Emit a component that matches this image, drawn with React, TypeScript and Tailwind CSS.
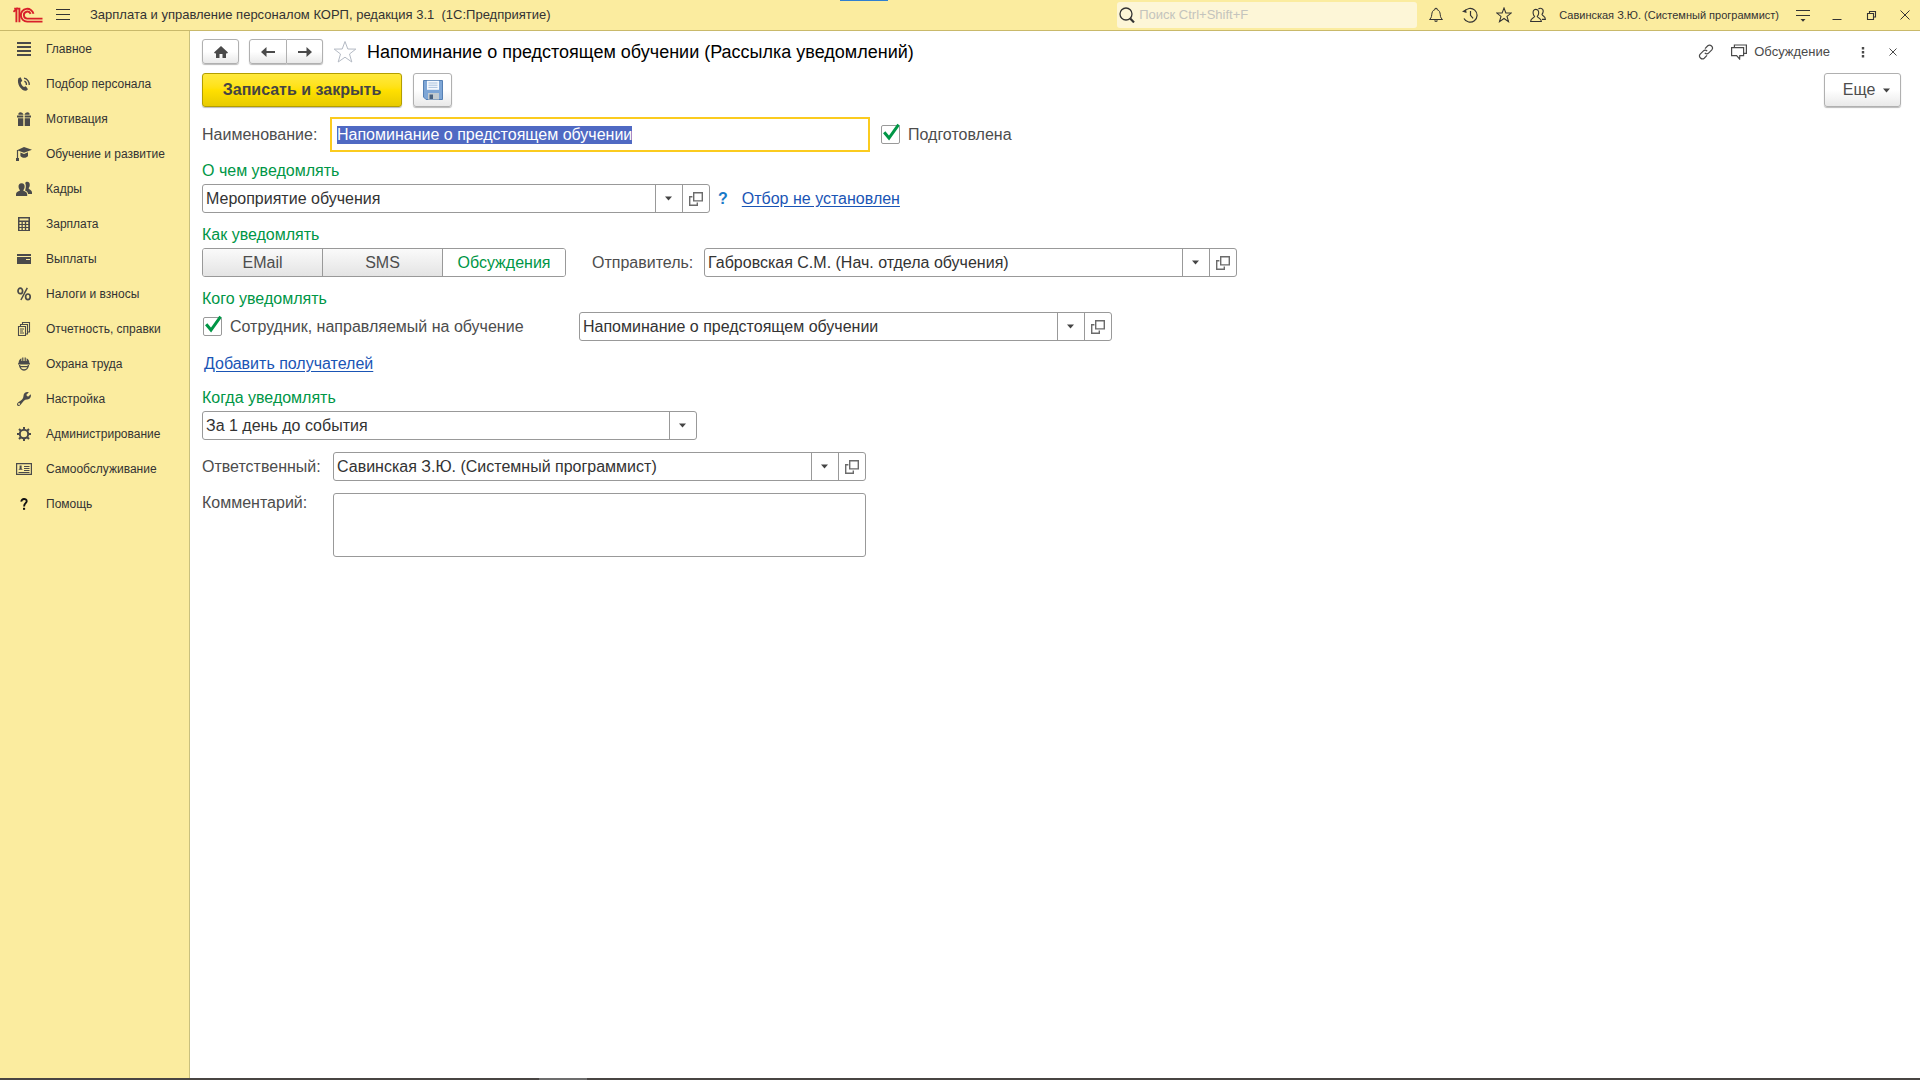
import React, { useEffect, useRef, useState } from "react";

type IconProps = { className?: string };

function Logo() {
  return (
    <svg width="30" height="16" viewBox="0 0 30 16" fill="none" stroke="#d8202a" strokeWidth="1.9">
      <path d="M0.4 4.8 L3.4 2.2 V15.2" />
      <path d="M1.2 1.6 H6.4 V15.2" />
      <path d="M20.5 6.8 A6.4 6.4 0 1 0 14.2 14.6 H29.5" />
      <path d="M17.6 6.8 A3.5 3.5 0 1 0 14.2 11.6 H29.5" />
    </svg>
  );
}

function Glyph({ children, className }: { children: React.ReactNode; className?: string }) {
  return (
    <svg width="16" height="16" viewBox="0 0 16 16" fill="none" stroke="currentColor" className={className}>
      {children}
    </svg>
  );
}

const solid = { fill: "currentColor", stroke: "none" };

const menuItems = [
  {
    label: "Главное",
    icon: <path {...solid} d="M1 1h14v2H1zM1 5h14v2H1zM1 9h14v2H1zM1 13h14v2H1z" />,
  },
  {
    label: "Подбор персонала",
    icon: (
      <>
        <path
          {...solid}
          d="M2.4 2.2 L4.6 1.2 L6.3 4.8 L4.8 6.2 C5 8.2 6.3 10 8 11 L9.8 10.2 L12 13.2 L10.2 14.8 C6 15.6 0.2 8 2.4 2.2z"
        />
        <path strokeWidth="1.3" d="M8.4 5.2 A3.6 3.6 0 0 1 10.4 9M8 2.2 A6.2 6.2 0 0 1 13.2 9" />
      </>
    ),
  },
  {
    label: "Мотивация",
    icon: (
      <path
        {...solid}
        d="M1 4.5h6.3v2H1zM8.7 4.5H15v2H8.7zM2 7.3h5.3V15H2zM8.7 7.3H14V15H8.7zM2.4 3.8C1.8 1 5.8 0 7.6 3.8zM8.4 3.8C10.2 0 14.2 1 13.6 3.8z"
      />
    ),
  },
  {
    label: "Обучение и развитие",
    icon: (
      <>
        <path {...solid} d="M8 1 L16 3.8 L8 6.8 L1 4.2z M4.4 6.4 L8 7.9 L12 6.3 V10 C10.6 12.4 5.8 12.4 4.4 10z M0 12h3v3H0z" />
        <path d="M1.5 4 V13" strokeWidth="1.2" />
      </>
    ),
  },
  {
    label: "Кадры",
    icon: (
      <path
        {...solid}
        d="M5.6 2.2C8 2.2 9 4 8.6 6.2C8.4 7.6 7.8 8.6 7.2 9.2C8 10.4 11.2 10.4 11.2 13.4V15H0V13.4C0 10.4 3.2 10.4 4 9.2C3.4 8.6 2.8 7.6 2.6 6.2C2.2 4 3.2 2.2 5.6 2.2z M9.2 2C10 .2 14 .2 13.8 4C13.7 5.6 13.2 6.4 12.6 7.2C13.2 8.6 16 9 16 11.4V13H12C12 11 10.6 10.2 9 9.4C9.8 8 10.4 4.4 9.2 2z"
      />
    ),
  },
  {
    label: "Зарплата",
    icon: (
      <path
        {...solid}
        fillRule="evenodd"
        d="M2 1h12v14H2zM3.5 2.5v2h9v-2zM3.5 6v2h2V6zM6.8 6v2h2V6zM10.2 6v2h2V6zM3.5 9v2h2V9zM6.8 9v2h2V9zM10.2 9v2h2V9zM3.5 12v2h2v-2zM6.8 12v2h2v-2zM10.2 12v2h2v-2z"
      />
    ),
  },
  {
    label: "Выплаты",
    icon: <path {...solid} fillRule="evenodd" d="M1 3h14v2H1zM1 6h14V13H1zM10 8v1h4V8z" />,
  },
  {
    label: "Налоги и взносы",
    icon: (
      <>
        <ellipse cx="4.3" cy="4.9" rx="2.3" ry="2.8" strokeWidth="1.7" />
        <ellipse cx="11.9" cy="10.8" rx="2.3" ry="2.8" strokeWidth="1.7" />
        <path strokeWidth="1.5" d="M11.3 1.8 L4.9 14" />
      </>
    ),
  },
  {
    label: "Отчетность, справки",
    icon: <path strokeWidth="1.1" d="M2.5 5.5h7v9h-7zM4.5 5V3.5h7V13H10M6.5 3V1.5h7V11H12M4 8h4M4 10h3M4 12h4" />,
  },
  {
    label: "Охрана труда",
    icon: (
      <>
        <path {...solid} d="M2.6 7C2.6 4.6 3.8 3 5.4 2.2V5h.8V1.6h1.2V5h1.2V1.6h1.2V5h.8V2.2C12.2 3 13.4 4.6 13.4 7L14 7.6V8.6H2V7.6z" />
        <path strokeWidth="1.4" d="M3.6 9C3.8 12 5.8 14 8 14S12.2 12 12.4 9M4 10.6h8" />
      </>
    ),
  },
  {
    label: "Настройка",
    icon: (
      <path
        {...solid}
        fillRule="evenodd"
        d="M12.8 1.3 L10.2 4 L12 5.8 L14.8 3.2C15.4 6 14 8.6 10.8 8.4C8.6 8.4 7.4 10.2 4.6 13.8C3.4 15.4 1.6 15.2 1.2 14.2C.6 13 1.4 11.8 2.6 11C5.4 9 7.4 7.8 7.4 5.4C7.4 2 10.2.6 12.8 1.3zM3 12.1a.9.9 0 1 0 .1 0z"
      />
    ),
  },
  {
    label: "Администрирование",
    icon: (
      <>
        <circle cx="8" cy="8" r="4.2" strokeWidth="2" />
        <path
          strokeWidth="2"
          d="M8 1v2.4M8 12.6V15M1 8h2.4M12.6 8H15M3 3l1.8 1.8M11.2 11.2L13 13M13 3l-1.8 1.8M4.8 11.2L3 13"
        />
      </>
    ),
  },
  {
    label: "Самообслуживание",
    icon: (
      <>
        <path d="M.6 2.7h14.8v10.6H.6z" strokeWidth="1.2" />
        <path {...solid} d="M3.6 4.4h2v3l1.2 1.4H2.4l1.2-1.4z" />
        <path d="M8 5.5h5.5M8 7.5h5.5M8 9.5h5.5M2.5 11.5h11" />
      </>
    ),
  },
  {
    label: "Помощь",
    icon: (
      <>
        <path stroke="#111" strokeWidth="1.9" d="M5.4 5.6C5.2 2.2 10.8 2.2 10.7 5.3C10.6 7.2 8.1 7.4 8.1 10.4" />
        <path fill="#111" stroke="none" d="M7 11.8h2.1v2H7z" />
      </>
    ),
  },
];

function BellIcon() {
  return (
    <Glyph>
      <path d="M1.5 12.5C4 10.5 3.4 8.6 4 6C4.5 3.8 5.6 3 7 2.6V1.4h2v1.2C10.4 3 11.5 3.8 12 6C12.6 8.6 12 10.5 14.5 12.5z" />
      <path {...solid} d="M6 13.6h4C9.6 15.4 6.4 15.4 6 13.6z" />
    </Glyph>
  );
}

function HistoryIcon() {
  return (
    <Glyph>
      <path d="M2.2 4.8 A6.9 6.9 0 1 1 2 11.4M8.5 4v4.4l2.6 3" strokeWidth="1.2" />
      <path {...solid} d="M0 4.6 L4.6 6 L4 2.2z" />
    </Glyph>
  );
}

function StarIcon({ className }: IconProps) {
  return (
    <svg viewBox="0 0 24 24" fill="none" stroke="currentColor" className={className}>
      <path d="M12 1.5 L14.8 9 L22.8 9.1 L16.5 14 L18.8 22 L12 17.2 L5.2 22 L7.5 14 L1.2 9.1 L9.2 9z" />
    </svg>
  );
}

function UsersIcon() {
  return (
    <Glyph>
      <path
        strokeWidth="1.1"
        d="M5.8 2.4C8.2 2.4 9 4.4 8.6 6.6C8.4 7.8 8 8.6 7.2 9.4C8 11.4 11.2 10.8 11.4 14.5H.6C.8 10.8 3.8 11.4 4.6 9.4C3.8 8.6 3.4 7.8 3.2 6.6C2.8 4.4 3.4 2.4 5.8 2.4zM8.4 2.2C9.6.8 13.4.8 13.2 4.4C13.1 5.8 12.6 6.6 12 7.4C12.6 9.4 15.4 9 15.4 12.4H12"
      />
    </Glyph>
  );
}

function ArrowDown() {
  return (
    <svg width="7" height="5" viewBox="0 0 7 5" fill="#444">
      <path d="M0 0.5h7L3.5 4.5z" />
    </svg>
  );
}

function OpenIcon() {
  return (
    <svg width="14" height="14" viewBox="0 0 14 14" fill="none" stroke="#6b6b6b" strokeWidth="1.4">
      <path d="M4.7 0.7h8.6v8.2H4.7zM3.4 4.8H0.7v8.5h7.6v-2.8" />
    </svg>
  );
}

function FloppyIcon() {
  return (
    <svg width="20" height="20" viewBox="0 0 20 20">
      <path d="M0.5 0.5h19v19H3L0.5 17z" fill="#7ea6d6" stroke="#5580b4" />
      <path d="M4 0.8h12v9H4z" fill="#f4f8fd" />
      <path d="M5.5 3h9M5.5 5.2h9M5.5 7.4h9" stroke="#a9c1de" />
      <path d="M5 13h11v6.5H5z" fill="#c3cbd0" />
      <path d="M6.5 14.5h3.5v4.5H6.5z" fill="#49617f" />
    </svg>
  );
}

type ComboProps = {
  id: string;
  value: string;
  label?: string;
  className: string;
};

function ComboField({ id, value, label, className }: ComboProps) {
  const [text, setText] = useState(value);

  return (
    <div className={`flex h-[29px] rounded-[3px] border border-[#999] bg-white ${className}`}>
      <input
        id={id}
        aria-label={label}
        value={text}
        onChange={(e) => setText(e.target.value)}
        className="min-w-0 flex-1 px-[3px] text-[#333] outline-none"
      />
      <button type="button" aria-label="Выбрать" className="flex w-[27px] items-center justify-center border-l border-[#999] pr-px">
        <ArrowDown />
      </button>
      <button type="button" aria-label="Открыть" className="flex w-[27px] items-center justify-center border-l border-[#999] pr-px">
        <OpenIcon />
      </button>
    </div>
  );
}

function CheckField({ label }: { label: string }) {
  return (
    <label className="flex items-center gap-2">
      <span className="relative size-[19px]">
        <input
          type="checkbox"
          defaultChecked
          className="peer block size-[19px] appearance-none rounded-[2px] border border-[#999] bg-white"
        />
        <svg
          viewBox="0 0 19 21"
          fill="none"
          stroke="#009646"
          strokeWidth="3"
          className="pointer-events-none invisible absolute -top-[2px] left-0 h-[21px] w-[19px] peer-checked:visible"
        >
          <path d="M3.2 9.2 L8 15 L17.6 1.6" />
        </svg>
      </span>
      {label}
    </label>
  );
}

const SectionTitle = ({ children }: { children: React.ReactNode }) => (
  <h2 className="mb-[3px] leading-5 text-[#009646]">{children}</h2>
);

const grayButton =
  "flex items-center justify-center border border-[#b0b0b0] bg-linear-to-b from-white from-50% to-[#e9e9e9] shadow-[0_1px_1px_#bbb]";

function TopBar() {
  return (
    <header className="relative flex h-[31px] items-center border-b border-[#c9b96a] bg-[#fbec9f] pr-[7px] pl-[13px] text-[13px] text-[#333]">
      <div className="absolute top-0 left-[840px] h-px w-12 bg-[#2f7fd0]" />
      <Logo />
      <button type="button" aria-label="Меню" className="ml-[13px]">
        <svg width="14" height="12" viewBox="0 0 14 12" stroke="#333">
          <path d="M0 .5h14M0 5.5h14M0 10.5h14" />
        </svg>
      </button>
      <span className="ml-5 whitespace-pre">Зарплата и управление персоналом КОРП, редакция 3.1  (1С:Предприятие)</span>
      <label className="ml-auto flex h-[26px] w-[300px] items-center gap-1 rounded-[3px] bg-[#fdf6d7] pl-[2px]">
        <svg width="16" height="16" viewBox="0 0 16 16" fill="none" stroke="#333">
          <circle cx="7" cy="7" r="6" strokeWidth="1.3" />
          <path d="M11.2 11.4 L15 15.4" strokeWidth="2.2" />
        </svg>
        <input placeholder="Поиск Ctrl+Shift+F" className="min-w-0 flex-1 outline-none placeholder:text-[#c4c4bd]" />
      </label>
      <div className="ml-[11px] flex items-center gap-[18px]">
        <button type="button" aria-label="Уведомления"><BellIcon /></button>
        <button type="button" aria-label="История"><HistoryIcon /></button>
        <button type="button" aria-label="Избранное"><StarIcon className="size-4 stroke-[1.6]" /></button>
        <button type="button" aria-label="Пользователи"><UsersIcon /></button>
      </div>
      <span className="ml-[13px] text-[11px]">Савинская З.Ю. (Системный программист)</span>
      <div className="ml-4 flex items-center gap-[18px]">
        <button type="button" aria-label="Сервис">
          <Glyph>
            <path d="M1 3.5h14M1 8.5h14" />
            <path {...solid} d="M5.5 12h5L8 14.8z" />
          </Glyph>
        </button>
        <button type="button" aria-label="Свернуть"><Glyph><path d="M3.5 12.5h9" /></Glyph></button>
        <button type="button" aria-label="Восстановить">
          <Glyph><path d="M4.5 6.5h6v6h-6zM6.5 6V4.5h6V10H11" strokeWidth="1.1" /></Glyph>
        </button>
        <button type="button" aria-label="Закрыть"><Glyph><path d="M3.5 3.5l9 9M12.5 3.5l-9 9" /></Glyph></button>
      </div>
    </header>
  );
}

function Sidebar() {
  return (
    <nav className="w-[190px] shrink-0 border-r border-[#c9c07e] bg-[#fbec9f] text-xs text-[#333]">
      {menuItems.map(({ label, icon }) => (
        <a key={label} href="#" className="flex h-[35px] items-center gap-[14px] pl-4 whitespace-nowrap">
          <Glyph className="shrink-0 text-[#4a4a4a]">{icon}</Glyph>
          {label}
        </a>
      ))}
    </nav>
  );
}

function TitleRow() {
  return (
    <div className="flex h-[25px] items-center text-[#4a4a4a]">
      <button type="button" aria-label="Домой" className={`h-[25px] w-[37px] rounded-[3px] ${grayButton}`}>
        <svg width="14" height="12" viewBox="0 0 14 12" fill="currentColor">
          <path d="M7 0L14 6.6L12.8 7.8L12 7V12H8.5V8H5.5V12H2V7L1.2 7.8L0 6.6z" />
        </svg>
      </button>
      <div className="ml-[10px] flex">
        <button type="button" aria-label="Назад" className={`h-[25px] w-[38px] rounded-l-[3px] ${grayButton}`}>
          <svg width="14" height="10" viewBox="0 0 14 10" fill="currentColor">
            <path d="M0 5L5.5 0V4H14V6H5.5V10z" />
          </svg>
        </button>
        <button type="button" aria-label="Вперед" className={`h-[25px] w-9 rounded-r-[3px] border-l-0 ${grayButton}`}>
          <svg width="14" height="10" viewBox="0 0 14 10" fill="currentColor">
            <path d="M14 5L8.5 0V4H0V6H8.5V10z" />
          </svg>
        </button>
      </div>
      <button type="button" aria-label="В избранное" className="ml-[10px]">
        <StarIcon className="size-6 text-[#b4bac4]" />
      </button>
      <h1 className="ml-[10px] text-lg text-black">Напоминание о предстоящем обучении (Рассылка уведомлений)</h1>
      <button type="button" aria-label="Ссылка" className="ml-auto">
        <Glyph>
          <path
            strokeWidth="1.2"
            d="M7 4.6L9.8 1.8C12.2-.4 16 3.2 13.8 5.8L10.8 8.8C9.6 10 7.8 9.8 6.8 8.8M9 11.4L6.2 14.2C3.8 16.4 0 12.8 2.2 10.2L5.2 7.2C6.4 6 8.2 6.2 9.2 7.2"
          />
        </Glyph>
      </button>
      <button type="button" className="ml-[17px] flex items-center gap-[7px] text-[13px]">
        <Glyph>
          <path strokeWidth="1.2" d="M.6 3.6h12v8H8.8L8.6 15L5.6 11.6H.6zM3.4 3.2V1h12v8.4H13" />
        </Glyph>
        Обсуждение
      </button>
      <button type="button" aria-label="Действия" className="ml-[25px]">
        <Glyph>
          <path {...solid} d="M6.8 3h2.4v2.4H6.8zM6.8 7h2.4v2.4H6.8zM6.8 11h2.4v2.4H6.8z" />
        </Glyph>
      </button>
      <button type="button" aria-label="Закрыть форму" className="ml-[14px]">
        <Glyph><path d="M4.5 4.5l7 7M11.5 4.5l-7 7" /></Glyph>
      </button>
    </div>
  );
}

const link = "leading-5 text-[#1a55b5] underline underline-offset-2";

function App() {
  const nameRef = useRef<HTMLInputElement>(null);
  const [channel, setChannel] = useState("Обсуждения");

  useEffect(() => {
    nameRef.current?.focus();
    nameRef.current?.select();
  }, []);

  return (
    <div className="flex min-h-screen flex-col bg-white font-['Liberation_Sans',Arial,sans-serif]">
      <TopBar />
      <div className="flex flex-1">
        <Sidebar />
        <main className="flex-1 pt-2 pr-[19px] pl-3 text-base text-[#4d4d4d]">
          <TitleRow />

          <div className="mt-[9px] flex gap-[11px]">
            <button
              type="button"
              className="h-[34px] w-[200px] rounded-[3px] border border-[#b39e00] bg-linear-to-b from-[#ffe93c] via-[#ffe000] to-[#e8cb00] font-bold text-[#444] shadow-[0_1px_1px_#bbb]"
            >
              Записать и закрыть
            </button>
            <button type="button" aria-label="Записать" className={`h-[34px] w-[39px] rounded-[3px] ${grayButton}`}>
              <FloppyIcon />
            </button>
            <button type="button" className={`ml-auto h-[34px] w-[77px] gap-2 rounded-[3px] pl-2 ${grayButton}`}>
              Еще
              <ArrowDown />
            </button>
          </div>

          <form onSubmit={(e) => e.preventDefault()}>
            <div className="mt-[10px] flex items-center">
              <label htmlFor="name" className="w-32">Наименование:</label>
              <input
                id="name"
                ref={nameRef}
                defaultValue="Напоминание о предстоящем обучении"
                className="mr-[11px] h-[35px] w-[540px] border-2 border-[#fbcb1f] px-[5px] text-[#333] outline-none selection:bg-[#4f69c3] selection:text-white"
              />
              <CheckField label="Подготовлена" />
            </div>

            <section className="mt-[9px]">
              <SectionTitle>О чем уведомлять</SectionTitle>
              <div className="flex items-center">
                <ComboField id="subject" label="О чем уведомлять" value="Мероприятие обучения" className="w-[508px]" />
                <button type="button" className="ml-2 font-bold text-[#1a7ac8]">?</button>
                <a href="#" className={`ml-[14px] ${link}`}>Отбор не установлен</a>
              </div>
            </section>

            <section className="mt-3">
              <SectionTitle>Как уведомлять</SectionTitle>
              <div className="flex items-center">
                <div className="flex h-[29px] w-[364px] divide-x divide-[#999] overflow-hidden rounded-[3px] border border-[#999]">
                  {["EMail", "SMS", "Обсуждения"].map((name) => (
                    <button
                      key={name}
                      type="button"
                      onClick={() => setChannel(name)}
                      className={
                        name === channel
                          ? "grow basis-[120px] bg-white text-[#009646]"
                          : "basis-[120px] bg-linear-to-b from-[#fafafa] to-[#e4e4e4]"
                      }
                    >
                      {name}
                    </button>
                  ))}
                </div>
                <label htmlFor="sender" className="ml-[26px] w-28">Отправитель:</label>
                <ComboField id="sender" value="Габровская С.М. (Нач. отдела обучения)" className="w-[533px]" />
              </div>
            </section>

            <section className="mt-3">
              <SectionTitle>Кого уведомлять</SectionTitle>
              <div className="flex items-center">
                <div className="w-[377px] pl-px">
                  <CheckField label="Сотрудник, направляемый на обучение" />
                </div>
                <ComboField
                  id="template"
                  label="Шаблон уведомления"
                  value="Напоминание о предстоящем обучении"
                  className="w-[533px]"
                />
              </div>
              <div className="mt-[13px] flex pl-[2px]">
                <a href="#" className={link}>Добавить получателей</a>
              </div>
            </section>

            <section className="mt-[14px]">
              <SectionTitle>Когда уведомлять</SectionTitle>
              <div className="relative h-[29px] w-[495px] rounded-[3px] border border-[#999]">
                <select aria-label="Когда уведомлять" className="h-full w-full appearance-none px-[3px] text-[#333] outline-none">
                  <option>За 1 день до события</option>
                </select>
                <span className="pointer-events-none absolute inset-y-0 right-0 flex w-[27px] items-center justify-center border-l border-[#999] pr-px">
                  <ArrowDown />
                </span>
              </div>
            </section>

            <div className="mt-3 flex items-center">
              <label htmlFor="owner" className="w-[131px]">Ответственный:</label>
              <ComboField id="owner" value="Савинская З.Ю. (Системный программист)" className="w-[533px]" />
            </div>
            <div className="mt-3 flex">
              <label htmlFor="comment" className="w-[131px] leading-5">Комментарий:</label>
              <textarea id="comment" className="h-16 w-[533px] resize-none rounded-[3px] border border-[#999] px-[3px] outline-none" />
            </div>
          </form>
        </main>
      </div>
      <footer className="h-[2px] bg-[#484543]">
        <div className="ml-[539px] h-full w-12 bg-[#6d6d6d]" />
      </footer>
    </div>
  );
}

export default App;
